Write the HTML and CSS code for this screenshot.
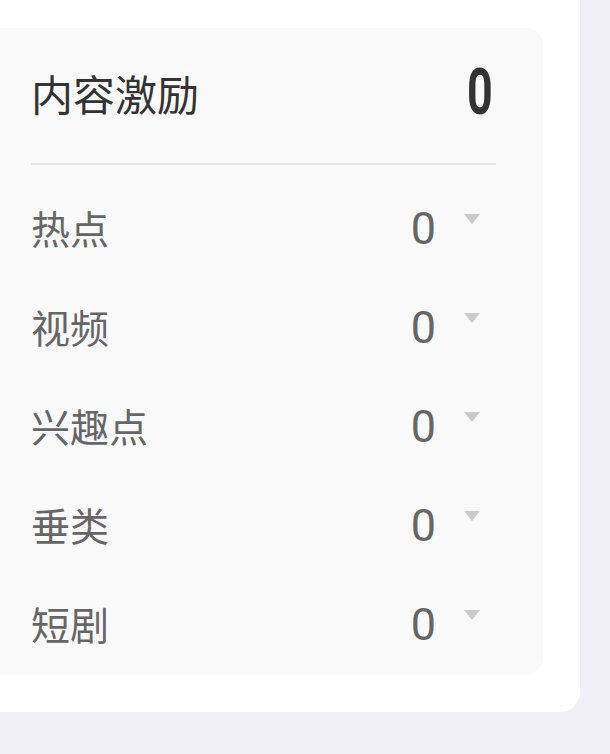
FILE: index.html
```html
<!DOCTYPE html>
<html lang="zh-CN">
<head>
  <meta charset="UTF-8" />
  <meta name="viewport" content="width=device-width, initial-scale=1.0"/>
  <title>内容激励</title>
  <link rel="stylesheet" href="styles.css">
</head>
<body>

<div class="panel">
  <div class="card">
    <div class="card-head">
      <span class="card-title">内容激励</span>
      <span class="card-total">0</span>
    </div>

    <ul class="list">
      <li class="row">
        <span class="row-label">热点</span>
        <span class="row-value">0</span>
        <span class="caret"></span>
      </li>
      <li class="row">
        <span class="row-label">视频</span>
        <span class="row-value">0</span>
        <span class="caret"></span>
      </li>
      <li class="row">
        <span class="row-label">兴趣点</span>
        <span class="row-value">0</span>
        <span class="caret"></span>
      </li>
      <li class="row">
        <span class="row-label">垂类</span>
        <span class="row-value">0</span>
        <span class="caret"></span>
      </li>
      <li class="row">
        <span class="row-label">短剧</span>
        <span class="row-value">0</span>
        <span class="caret"></span>
      </li>
    </ul>
  </div>
</div>

</body>
</html>
```

FILE: styles.css
```css
body {
  margin: 0;
  background-color: #f1f0f6;
  font-family: "Noto Sans CJK SC", "Noto Sans", sans-serif;
  overflow: hidden;
}

.panel {
  box-sizing: border-box;
  width: 600px;
  margin-left: -20px;
  padding: 28px 37px 38px 0;
  background-color: #fff;
  border-radius: 0 0 20px 0;
}

.card {
  background-color: #f9f9f9;
  border-radius: 16px;
  padding: 0 47px 0 51px;
}

.card-head {
  box-sizing: border-box;
  height: 137px;
  padding-bottom: 6px;
  display: flex;
  align-items: center;
  justify-content: space-between;
  border-bottom: 2px solid #e6e6e6;
}

.card-title {
  font-size: 42px;
  color: #333;
}

.card-total {
  font-family: Roboto, sans-serif;
  font-weight: bold;
  font-size: 64px;
  line-height: 1;
  color: #333;
  margin-right: 3px;
  transform: scaleX(0.7);
  transform-origin: right center;
}

.list {
  list-style: none;
  margin: 0;
  padding: 14px 0 0;
}

.row {
  height: 99px;
  display: flex;
  align-items: center;
}

.row-label {
  flex: 1;
  font-size: 39px;
  color: #666;
  margin-top: -4px;
}

.row-value {
  font-family: Roboto, sans-serif;
  font-size: 45px;
  line-height: 1;
  color: #666;
}

.caret {
  margin: -20px 16px 0 28px;
  width: 0;
  height: 0;
  border-left: 8px solid transparent;
  border-right: 8px solid transparent;
  border-top: 10px solid #cacaca;
}
```
